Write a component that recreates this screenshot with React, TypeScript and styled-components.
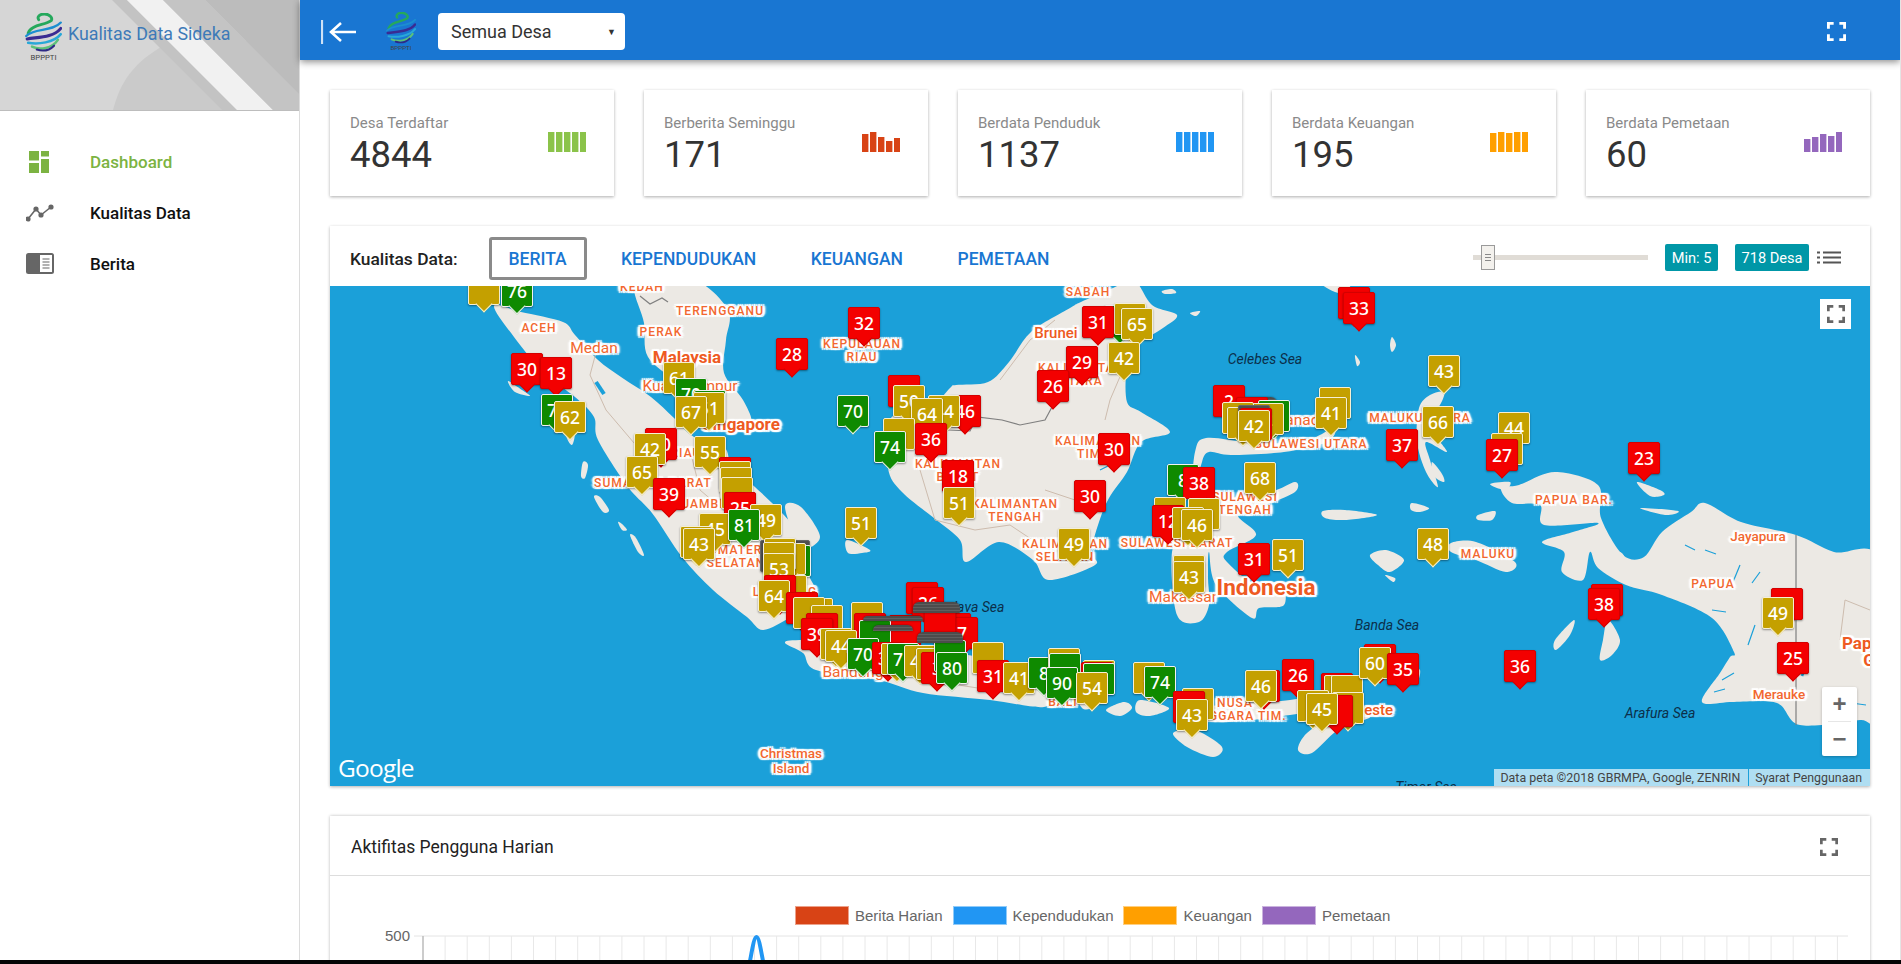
import React from "react";
import styled, { createGlobalStyle, css } from "styled-components";

const Global = createGlobalStyle`
  html, body { margin: 0; padding: 0; background: #fff; overflow: hidden; }
  body { font-family: Roboto, "Liberation Sans", sans-serif; }
  * { box-sizing: border-box; }
`;

const Page = styled.div`
  width: 1901px;
  height: 964px;
  display: flex;
  flex-direction: column;
  overflow: hidden;
`;
const Shell = styled.div`
  height: 960px;
  display: flex;
  overflow: hidden;
  border-right: 1px solid #e4e4e4;
`;
const BottomEdge = styled.div`
  height: 4px;
  background: #050505;
`;

const Sidebar = styled.aside`
  width: 300px;
  flex: none;
  background: #fff;
  border-right: 1px solid #dcdcdc;
`;
const Brand = styled.div`
  position: relative;
  height: 111px;
  overflow: hidden;
  display: flex;
  align-items: flex-start;
  padding: 13px 0 0 25px;
  border-bottom: 1px solid #bdbdbd;
`;
const BrandArt = styled.svg`
  position: absolute;
  inset: 0;
`;
const BrandName = styled.span`
  position: relative;
  margin: 10px 0 0 6px;
  font-size: 17.8px;
  color: #3d7ab8;
  white-space: nowrap;
`;
const BrandLogo = styled.div`
  position: relative;
  display: flex;
`;
const Nav = styled.nav`
  display: flex;
  flex-direction: column;
  padding-top: 25px;
`;
const NavItem = styled.a<{ $active?: boolean }>`
  height: 51px;
  display: flex;
  align-items: center;
  padding-left: 26px;
  font-size: 17px;
  font-weight: 500;
  color: ${(p) => (p.$active ? "#7cb342" : "#111")};
`;
const NavIcon = styled.span`
  width: 64px;
  display: flex;
  align-items: center;
`;

const Main = styled.main`
  flex: 1;
  min-width: 0;
  display: flex;
  flex-direction: column;
`;
const TopBar = styled.header`
  height: 60px;
  flex: none;
  background: #1976d2;
  box-shadow: 0 2px 7px rgba(0, 0, 0, 0.45);
  display: flex;
  align-items: center;
  padding: 3px 54px 0 21px;
  position: relative;
  z-index: 2;
`;
const TopLogo = styled.div`
  margin: 0 22px 0 28px;
  display: flex;
`;
const DesaSelect = styled.div`
  width: 187px;
  height: 37px;
  background: #fff;
  border-radius: 4px;
  display: flex;
  align-items: center;
  justify-content: space-between;
  padding: 0 9px 0 13px;
  font-size: 18px;
  color: #333;
`;
const Caret = styled.span`
  font-size: 9px;
  color: #333;
`;
const TopAction = styled.span`
  margin-left: auto;
  display: flex;
`;

const Content = styled.div`
  padding: 30px 30px 0;
  display: flex;
  flex-direction: column;
  gap: 30px;
`;
const Stats = styled.section`
  display: grid;
  grid-template-columns: repeat(5, 284px);
  justify-content: space-between;
`;
const StatCard = styled.article`
  height: 106px;
  background: #fff;
  box-shadow: 0 1px 3px rgba(0, 0, 0, 0.32);
  padding: 24px 28px 0 20px;
  display: flex;
  justify-content: space-between;
`;
const StatLabel = styled.div`
  font-size: 15px;
  line-height: 18px;
  color: #8a8a8a;
`;
const StatValue = styled.div`
  font-size: 36.5px;
  line-height: 42px;
  margin-top: 2px;
  color: #333;
`;
const Spark = styled.div`
  margin-top: 18px;
`;

const Panel = styled.section`
  background: #fff;
  box-shadow: 0 1px 3px rgba(0, 0, 0, 0.3);
`;
const PanelHead = styled.div`
  height: 60px;
  display: flex;
  align-items: center;
  padding: 3px 29px 0 20px;
`;
const PanelTitle = styled.span`
  font-size: 17.4px;
  font-weight: 500;
  color: #222;
  white-space: nowrap;
  margin-top: 2px;
`;
const Tabs = styled.div`
  display: flex;
  align-items: center;
  gap: 14px;
  margin: 2px 0 0 31px;
`;
const Tab = styled.button<{ $active?: boolean }>`
  height: 43px;
  background: #fff;
  font: 500 17.5px Roboto, sans-serif;
  color: #1976d2;
  border-radius: 3px;
  ${(p) =>
    p.$active
      ? css`
          border: 3px solid #8a8a8a;
          width: 98px;
          padding: 0;
        `
      : css`
          border: 0;
          padding: 0 20.3px;
        `}
`;
const Controls = styled.div`
  margin-left: auto;
  display: flex;
  align-items: center;
`;
const SliderTrack = styled.div`
  position: relative;
  width: 175px;
  height: 5px;
  background: #e0dcd6;
  margin-right: 17px;
`;
const SliderHandle = styled.span`
  position: absolute;
  left: 8px;
  top: -10px;
  width: 14px;
  height: 25px;
  background: #f3f1ed;
  border: 1px solid #9a9a9a;
  display: flex;
  flex-direction: column;
  justify-content: center;
  align-items: center;
  gap: 2px;
  i {
    width: 6px;
    height: 1px;
    background: #888;
  }
`;
const Badge = styled.span<{ $w: number }>`
  width: ${(p) => p.$w}px;
  height: 27px;
  display: flex;
  align-items: center;
  justify-content: center;
  background: #0097a7;
  color: #fff;
  font-size: 14.6px;
  border-radius: 2px;
  margin-right: 17px;
  white-space: nowrap;
`;
const ListBtn = styled.span`
  display: flex;
  margin-left: -9px;
`;

const MapBox = styled.div`
  position: relative;
  height: 500px;
  background: #1ba0d9;
  overflow: hidden;
`;
const MapArt = styled.svg`
  position: absolute;
  inset: 0;
`;
const labelKinds = {
  region: css`
    font-size: 12px;
    line-height: 12.5px;
    letter-spacing: 1.05px;
    font-weight: 500;
    color: #f2672f;
  `,
  city: css`
    font-size: 15.5px;
    line-height: 17px;
    color: #f2672f;
  `,
  small: css`
    font-size: 13.5px;
    line-height: 15px;
    font-weight: 500;
    color: #f2672f;
  `,
  mid: css`
    font-size: 15px;
    line-height: 16px;
    font-weight: 500;
    color: #ee5a22;
  `,
  big: css`
    font-size: 17px;
    line-height: 18px;
    font-weight: 700;
    color: #ee5a22;
  `,
  huge: css`
    font-size: 22.5px;
    line-height: 24px;
    font-weight: 700;
    color: #ee5a22;
  `,
  sea: css`
    font-size: 14px;
    font-style: italic;
    color: #0b2f4a;
    text-shadow: none;
  `,
};
type LabelKind = keyof typeof labelKinds;
const Label = styled.span<{ $kind: LabelKind }>`
  position: absolute;
  transform: translate(-50%, -50%);
  white-space: pre-line;
  text-align: center;
  text-shadow: 0 0 2px #fff, 0 0 2px #fff, 2px 0 1px #fff, -2px 0 1px #fff, 0 2px 1px #fff, 0 -2px 1px #fff,
    2px 2px 1px #fff, -2px -2px 1px #fff, 2px -2px 1px #fff, -2px 2px 1px #fff, 3px 0 2px #fff, -3px 0 2px #fff;
  ${(p) => labelKinds[p.$kind]}
`;
const tones = {
  r: { bg: "#f30000", line: "#d40000" },
  g: { bg: "#0f8a00", line: "#f2f2f2" },
  y: { bg: "#c4a000", line: "#f6f0d4" },
  d: { bg: "#4f4f4f", line: "#666666" },
};
type Tone = keyof typeof tones;
const Pin = styled.div<{ $tone: Tone }>`
  position: absolute;
  width: 32px;
  height: 32px;
  border-radius: 2px;
  border: 1px solid ${(p) => tones[p.$tone].line};
  background: ${(p) => tones[p.$tone].bg};
  color: #fff;
  font: 500 17.5px/30px "Noto Sans", sans-serif;
  text-align: center;
  box-shadow: 0 1px 2px rgba(0, 0, 0, 0.4);
  &::after {
    content: "";
    position: absolute;
    left: 9px;
    bottom: -6px;
    width: 11px;
    height: 11px;
    transform: rotate(45deg);
    background: ${(p) => tones[p.$tone].bg};
    border-right: 1px solid ${(p) => tones[p.$tone].line};
    border-bottom: 1px solid ${(p) => tones[p.$tone].line};
    z-index: -1;
  }
  span {
    position: relative;
    z-index: 1;
  }
`;
const PinStack = styled.div`
  position: absolute;
  border-radius: 6px 6px 1px 1px;
  background: repeating-linear-gradient(180deg, #4c4c4c 0 2px, #5f5f5f 2px 3px);
  box-shadow: 0 0 2px rgba(0, 0, 0, 0.5);
`;
const MapCorner = styled.button`
  position: absolute;
  right: 19px;
  top: 13px;
  width: 31px;
  height: 30px;
  background: #fff;
  border: 0;
  padding: 0;
  display: flex;
  align-items: center;
  justify-content: center;
`;
const ZoomBox = styled.div`
  position: absolute;
  right: 13px;
  bottom: 30px;
  width: 35px;
  height: 69px;
  background: #fff;
  border-radius: 2px;
  display: flex;
  flex-direction: column;
  align-items: center;
  box-shadow: 0 1px 3px rgba(0, 0, 0, 0.25);
`;
const ZoomKey = styled.span`
  flex: 1;
  width: 23px;
  display: flex;
  align-items: center;
  justify-content: center;
  color: #666;
  font: 700 24px/1 "Liberation Sans", sans-serif;
  &:first-child {
    border-bottom: 1px solid #e6e6e6;
  }
`;
const GoogleMark = styled.span`
  position: absolute;
  left: 8px;
  bottom: 3px;
  font: 500 24.5px/30px "Open Sans", sans-serif;
  color: #fff;
  letter-spacing: -0.8px;
`;
const Attribution = styled.div`
  position: absolute;
  right: 0;
  bottom: 0;
  height: 17px;
  display: flex;
  font-size: 12.4px;
  line-height: 17px;
  color: #444;
  span {
    background: rgba(255, 255, 255, 0.65);
    padding: 0 8px 0 6px;
    white-space: nowrap;
  }
  span + span {
    margin-left: 1px;
    padding: 0 8px 0 6px;
  }
`;

const ChartPanel = styled.section`
  background: #fff;
  box-shadow: 0 0 3px rgba(0, 0, 0, 0.28);
  height: 170px;
  overflow: hidden;
`;
const ChartHead = styled.div`
  height: 60px;
  display: flex;
  align-items: center;
  justify-content: space-between;
  padding: 2px 32px 0 21px;
  border-bottom: 1px solid #ddd;
`;
const ChartTitle = styled.span`
  font-size: 17.5px;
  color: #222;
`;
const ChartHeadIcon = styled.span`
  display: flex;
`;
const Legend = styled.div`
  display: flex;
  padding: 30px 0 0 465px;
  height: 50px;
`;
const LegendItem = styled.div`
  display: flex;
  align-items: center;
  height: 19px;
  gap: 6px;
  margin-right: 10px;
  font: 15px "Liberation Sans", sans-serif;
  color: #666;
  white-space: nowrap;
`;
const Swatch = styled.i<{ $c: string }>`
  width: 54px;
  height: 19px;
  background: ${(p) => p.$c};
  border: 1px solid rgba(255, 255, 255, 0.5);
`;
const ChartArt = styled.svg`
  display: block;
`;

function Logo({ w, h, textY }: { w: number; h: number; textY: number }) {
  return (
    <svg width={w} height={h} viewBox="0 0 38 50" fill="none" strokeLinecap="round">
      <path d="M3 21C6 12 20 13 27 8C29 5 25 1 20 1C15 1 12 4 14 7" stroke="#25a85c" strokeWidth="3" />
      <path d="M1 24C9 15 28 20 37 10" stroke="#1c8ed0" strokeWidth="2.4" />
      <path d="M2 27C12 25 29 26 37 16" stroke="#3a2b92" strokeWidth="3.2" />
      <path d="M3 31C13 33 30 31 37 22" stroke="#29a8d8" strokeWidth="2.6" />
      <path d="M7 35C15 39 28 37 34 28" stroke="#5cc27a" strokeWidth="2.6" />
      <path d="M12 38C18 40 25 39 30 34" stroke="#2d2a86" strokeWidth="2.2" />
      <text x="19" y={textY} fontSize="8" fontFamily="Roboto, sans-serif" textAnchor="middle" fill="#444">
        BPPPTI
      </text>
    </svg>
  );
}

const Expand = ({ c, s = 20, w = 3 }: { c: string; s?: number; w?: number }) => (
  <svg width={s} height={s} viewBox="0 0 20 20" fill="none" stroke={c} strokeWidth={w}>
    <path d="M1.5 7V1.5H7M13 1.5H18.5V7M18.5 13V18.5H13M7 18.5H1.5V13" />
  </svg>
);

const Bars = ({ c, hs }: { c: string; hs: number[] }) => (
  <svg width="38" height="20" viewBox="0 0 38 20">
    {hs.map((h, i) => (
      <rect key={i} x={i * 8} y={20 - h} width="6.4" height={h} fill={c} />
    ))}
  </svg>
);

const stats = [
  { l: "Desa Terdaftar", v: "4844", c: "#8bc34a", h: [20, 20, 20, 20, 20] },
  { l: "Berberita Seminggu", v: "171", c: "#d84315", h: [18, 20, 15, 11, 14] },
  { l: "Berdata Penduduk", v: "1137", c: "#2196f3", h: [20, 20, 20, 20, 20] },
  { l: "Berdata Keuangan", v: "195", c: "#ff9f00", h: [19, 20, 19, 20, 20] },
  { l: "Berdata Pemetaan", v: "60", c: "#9467bd", h: [13, 15, 18, 16, 20] },
];

const land: string[] = [
  // Sumatra
  "494,306 521,312 563,322 575,335 598,360 621,377 651,397 674,418 694,437 724,447 732,467 755,487 782,513 797,533 808,573 816,593 805,613 790,618 763,630 747,617 713,590 682,557 652,513 628,487 598,440 594,417 575,397 544,373 514,337",
  // Malay peninsula
  "636,280 694,280 728,310 726,340 724,373 743,400 751,423 728,427 709,413 680,385 648,357 644,323",
  // Borneo
  "888,468 891,418 927,411 950,388 956,385 988,382 1009,362 1031,332 1070,308 1081,302 1113,288 1134,280 1152,305 1177,315 1163,328 1138,345 1127,368 1127,402 1141,412 1170,432 1141,442 1127,472 1109,498 1099,522 1091,552 1095,565 1049,580 1033,560 999,542 966,562 960,540 934,518 902,492",
  // Sulawesi
  "1195,452 1206,438 1249,442 1302,442 1334,428 1327,442 1284,452 1231,455 1209,452 1202,462 1199,485 1220,498 1270,492 1295,482 1295,492 1266,505 1238,515 1256,535 1227,552 1227,562 1256,585 1281,582 1284,605 1259,608 1252,618 1216,585 1209,552 1208,578 1209,605 1199,622 1177,615 1172,552 1188,518 1191,498",
  // Papua
  "1519,485 1555,472 1598,485 1601,518 1623,555 1644,557 1662,532 1691,512 1705,503 1741,522 1796,535 1834,552 1880,562 1880,716 1860,720 1800,725 1777,703 1733,702 1702,702 1720,673 1730,657 1734,652 1712,618 1662,595 1626,585 1598,568 1590,552 1583,580 1562,572 1564,552 1542,542 1573,532 1598,523 1544,525 1540,505 1512,503 1501,488",
  // Java
  "785,643 800,640 870,640 968,655 1030,670 1044,690 1044,707 990,700 923,693 879,680 816,670 803,653",
  // Bali, Lombok, Sumbawa, Flores
  "1075,690 1098,694 1093,707 1082,708",
  "1106,710 1124,702 1132,708 1120,716",
  "1140,700 1169,708 1150,716 1136,712",
  "1213,706 1290,700 1330,690 1330,705 1290,715 1213,722",
  // Timor, Sumba
  "1370,717 1338,730 1312,753 1298,750 1307,733 1334,717",
  "1173,733 1195,730 1222,747 1213,757 1187,747",
  // Bangka, Belitung and west coast islands
  "785,507 801,507 820,537 801,547",
  "847,540 870,550 862,553 848,553",
  "583,462 588,465 585,478 581,476",
  "594,497 600,497 609,510 603,512",
  "618,522 622,524 627,530 622,530",
  "630,535 636,538 644,555 638,552",
  "508,381 522,390 530,396 515,392",
  "568,420 575,430 572,445 566,435",
  // Halmahera
  "1444,392 1430,395 1419,408 1417,442 1426,472 1438,487 1430,460 1426,442 1447,452 1435,435 1429,418 1440,405",
  // Seram, Buru
  "1451,543 1476,542 1515,562 1506,572 1476,560 1451,552",
  "1370,555 1386,550 1404,560 1390,572 1378,565",
  // Biak, Yapen, Yamdena
  "1637,482 1660,490 1664,495 1650,496",
  "1640,508 1678,511 1665,515",
  "1608,620 1620,640 1612,655 1600,660 1603,640",
  // Obi, Misool, Sula
  "1412,503 1429,508 1420,512 1411,510",
  "1478,515 1495,511 1492,520 1478,520",
  "1323,511 1345,510 1377,515 1345,520 1325,518",
  // small ones
  "1320,282 1345,282 1352,294 1335,292",
  "1490,484 1510,482 1505,490",
  "1566,490 1572,494 1568,498",
  "1392,337 1396,345 1392,352 1390,345",
  "1355,355 1360,362 1357,366",
  "1555,640 1574,620 1570,635 1556,650",
  "1413,668 1420,670 1418,680 1412,675",
  "1162,291 1172,289 1176,293 1165,294",
  "1190,313 1200,311 1196,316",
  "1385,575 1395,578 1393,582",
  "1432,462 1442,474 1444,482 1434,476",
  "1620,552 1624,556 1621,560",
];

/** Closed Catmull-Rom curve through the points, so the coasts are not angular. */
function coast(points: string, k = 0.16): string {
  const p = points.split(" ").map((s) => s.split(",").map(Number));
  const n = p.length;
  let d = `M${p[0][0]} ${p[0][1]}`;
  for (let i = 0; i < n; i++) {
    const a = p[(i - 1 + n) % n];
    const b = p[i];
    const c = p[(i + 1) % n];
    const e = p[(i + 2) % n];
    d += `C${b[0] + (c[0] - a[0]) * k} ${b[1] + (c[1] - a[1]) * k} ${c[0] - (e[0] - b[0]) * k} ${
      c[1] - (e[1] - b[1]) * k
    } ${c[0]} ${c[1]}`;
  }
  return d + "Z";
}

type L = [string, number, number, LabelKind];
const labels: L[] = [
  ["ACEH", 539, 328, "region"],
  ["Medan", 594, 348, "city"],
  ["KEDAH", 642, 287, "region"],
  ["TERENGGANU", 720, 311, "region"],
  ["PERAK", 661, 332, "region"],
  ["Malaysia", 687, 357, "big"],
  ["Kuala Lumpur", 690, 386, "city"],
  ["Singapore", 741, 424, "big"],
  ["RIAU", 686, 453, "region"],
  ["SUMATERA BARAT", 653, 483, "region"],
  ["JAMBI", 703, 504, "region"],
  ["SUMATERA\nSELATAN", 736, 556, "region"],
  ["LAMPUNG", 785, 592, "region"],
  ["KEPULAUAN\nRIAU", 862, 350, "region"],
  ["SABAH", 1088, 292, "region"],
  ["Brunei", 1056, 333, "mid"],
  ["KALIMANTAN\nUTARA", 1081, 374, "region"],
  ["KALIMANTAN\nBARAT", 958, 470, "region"],
  ["KALIMANTAN\nTIMUR", 1098, 447, "region"],
  ["KALIMANTAN\nTENGAH", 1015, 510, "region"],
  ["KALIMANTAN\nSELATAN", 1065, 550, "region"],
  ["Celebes Sea", 1265, 359, "sea"],
  ["Manado", 1300, 420, "city"],
  ["SULAWESI UTARA", 1311, 444, "region"],
  ["SULAWESI\nTENGAH", 1245, 503, "region"],
  ["SULAWESI BARAT", 1177, 543, "region"],
  ["Makassar", 1183, 597, "city"],
  ["Indonesia", 1266, 587, "huge"],
  ["Java Sea", 977, 607, "sea"],
  ["Bandung", 853, 672, "city"],
  ["BALI", 1063, 702, "region"],
  ["NUSA\nTENGGARA TIM.", 1235, 709, "region"],
  ["Timor-Leste", 1352, 710, "mid"],
  ["Christmas\nIsland", 791, 761, "small"],
  ["MALUKU UTARA", 1420, 418, "region"],
  ["MALUKU", 1488, 554, "region"],
  ["PAPUA BAR.", 1574, 500, "region"],
  ["Jayapura", 1758, 536, "small"],
  ["PAPUA", 1713, 584, "region"],
  ["Banda Sea", 1387, 625, "sea"],
  ["Arafura Sea", 1660, 713, "sea"],
  ["Timor Sea", 1426, 787, "sea"],
  ["Merauke", 1779, 694, "small"],
  ["Papua", 1866, 643, "big"],
  ["Guinea", 1890, 660, "big"],
];

type P = [number, number, string, Tone];
const pinsBack: P[] = [
  [484, 288, "", "y"],
  [517, 290, "76", "g"],
  [527, 368, "30", "r"],
  [556, 372, "13", "r"],
  [557, 409, "70", "g"],
  [570, 416, "62", "y"],
  [679, 377, "61", "y"],
  [691, 393, "70", "g"],
  [710, 405, "", "g"],
  [709, 407, "51", "y"],
  [691, 411, "67", "y"],
  [661, 443, "40", "r"],
  [650, 448, "42", "y"],
  [642, 471, "65", "y"],
  [710, 451, "55", "y"],
  [735, 472, "", "r"],
  [735, 476, "", "y"],
  [736, 482, "", "y"],
  [737, 492, "", "y"],
  [669, 493, "39", "r"],
  [740, 507, "25", "r"],
  [766, 519, "49", "y"],
  [715, 528, "45", "y"],
  [744, 524, "81", "g"],
  [696, 541, "", "y"],
  [699, 543, "43", "y"],
  [792, 353, "28", "r"],
  [864, 322, "32", "r"],
  [853, 410, "70", "g"],
  [861, 522, "51", "y"],
  [776, 555, "", "d"],
  [794, 555, "", "d"],
  [795, 560, "", "g"],
  [790, 558, "", "y"],
  [780, 553, "", "y"],
  [779, 557, "", "y"],
  [779, 568, "53", "y"],
  [791, 590, "", "y"],
  [780, 590, "", "r"],
  [774, 595, "64", "y"],
  [802, 607, "", "r"],
  [817, 613, "", "y"],
  [809, 612, "", "y"],
  [827, 620, "", "y"],
  [867, 617, "", "y"],
  [922, 597, "", "r"],
  [928, 602, "26", "r"],
  [955, 628, "", "r"],
  [962, 632, "7", "r"],
  [940, 625, "", "r"],
  [870, 628, "", "r"],
  [905, 630, "", "r"],
  [875, 635, "", "g"],
  [822, 628, "", "r"],
  [817, 633, "39", "r"],
  [836, 643, "", "y"],
  [841, 645, "44", "y"],
  [863, 653, "70", "g"],
  [888, 657, "39", "r"],
  [897, 658, "", "y"],
  [903, 658, "71", "g"],
  [920, 660, "45", "y"],
  [932, 663, "", "y"],
  [937, 667, "3", "r"],
  [950, 655, "", "g"],
  [952, 667, "80", "g"],
  [988, 657, "", "y"],
  [993, 675, "31", "r"],
  [1019, 677, "41", "y"],
];
const pinsFront: P[] = [
  [1044, 672, "8", "g"],
  [1064, 663, "", "y"],
  [1065, 668, "", "g"],
  [1099, 675, "", "y"],
  [1097, 677, "", "r"],
  [1099, 678, "", "g"],
  [1062, 682, "90", "g"],
  [1092, 687, "54", "y"],
  [1149, 677, "4", "y"],
  [1160, 681, "74", "g"],
  [1198, 703, "", "y"],
  [1189, 706, "", "r"],
  [1192, 714, "43", "y"],
  [1264, 685, "", "r"],
  [1261, 685, "46", "y"],
  [1298, 674, "26", "r"],
  [1337, 688, "", "r"],
  [1340, 690, "", "y"],
  [1347, 690, "", "y"],
  [1313, 705, "", "y"],
  [1348, 707, "2", "y"],
  [1337, 710, "", "r"],
  [1322, 708, "45", "y"],
  [1380, 659, "", "r"],
  [1375, 662, "60", "y"],
  [1403, 668, "35", "r"],
  [1520, 665, "36", "r"],
  [1793, 657, "25", "r"],
  [904, 390, "", "r"],
  [909, 400, "50", "y"],
  [965, 410, "46", "r"],
  [944, 410, "44", "y"],
  [927, 413, "64", "y"],
  [899, 433, "", "y"],
  [890, 446, "74", "g"],
  [931, 438, "36", "r"],
  [958, 475, "18", "r"],
  [959, 502, "51", "y"],
  [1120, 320, "7", "g"],
  [1130, 318, "", "y"],
  [1098, 321, "31", "r"],
  [1137, 323, "65", "y"],
  [1082, 361, "29", "r"],
  [1124, 357, "42", "y"],
  [1053, 385, "26", "r"],
  [1114, 448, "30", "r"],
  [1090, 495, "30", "r"],
  [1074, 543, "49", "y"],
  [1354, 302, "", "r"],
  [1359, 307, "33", "r"],
  [1229, 400, "2", "r"],
  [1252, 412, "", "r"],
  [1274, 415, "", "g"],
  [1268, 418, "2", "y"],
  [1238, 417, "", "y"],
  [1243, 422, "", "y"],
  [1254, 420, "", "d"],
  [1256, 423, "", "r"],
  [1254, 425, "42", "y"],
  [1335, 402, "", "y"],
  [1331, 412, "41", "y"],
  [1183, 479, "8", "g"],
  [1199, 482, "38", "r"],
  [1260, 477, "68", "y"],
  [1204, 513, "", "y"],
  [1170, 512, "", "y"],
  [1168, 520, "12", "r"],
  [1188, 522, "", "y"],
  [1197, 524, "46", "y"],
  [1189, 570, "", "y"],
  [1189, 576, "43", "y"],
  [1254, 558, "31", "r"],
  [1288, 554, "51", "y"],
  [1444, 370, "43", "y"],
  [1438, 421, "66", "y"],
  [1402, 444, "37", "r"],
  [1514, 427, "44", "y"],
  [1507, 448, "", "y"],
  [1502, 454, "27", "r"],
  [1644, 457, "23", "r"],
  [1433, 543, "48", "y"],
  [1607, 599, "", "r"],
  [1604, 603, "38", "r"],
  [1787, 603, "7", "r"],
  [1778, 612, "49", "y"],
];

const stacks: [number, number, number, number][] = [
  [913, 602, 47, 11],
  [863, 616, 60, 5],
  [873, 625, 40, 6],
  [917, 632, 46, 11],
  [1234, 397, 43, 8],
];

const renderPin = ([x, y, n, t]: P, i: number) => (
  <Pin key={i} $tone={t} style={{ left: x - 346, top: y - 301, zIndex: 0 }}>
    <span>{n}</span>
  </Pin>
);

export default function App() {
  const gridX = Array.from({ length: 65 }, (_, i) => 93 + i * 22.1);
  return (
    <Page>
      <Global />
      <Shell>
        <Sidebar>
          <Brand>
            <BrandArt width="299" height="110" viewBox="0 0 299 110">
              <rect width="299" height="110" fill="#d6d6d6" />
              <path d="M113 110C122 75 140 58 170 42L299 40V110Z" fill="#cacaca" />
              <path d="M112 0H127L237 110H222Z" fill="#c3c3c3" />
              <path d="M127 0H163L273 110H237Z" fill="#f1f1f1" />
              <path d="M163 0H205L299 94V110H273Z" fill="#c4c4c4" />
              <path d="M205 0H299V94Z" fill="#bcbcbc" />
            </BrandArt>
            <BrandLogo>
              <Logo w={37} h={48} textY={49} />
            </BrandLogo>
            <BrandName>Kualitas Data Sideka</BrandName>
          </Brand>
          <Nav>
            <NavItem $active>
              <NavIcon>
                <svg width="26" height="22" viewBox="0 0 26 22" fill="#7cb342">
                  <rect x="3" y="0" width="10" height="9.5" />
                  <rect x="15" y="0" width="8" height="5.5" />
                  <rect x="3" y="12" width="10" height="10" />
                  <rect x="15" y="8" width="8" height="14" />
                </svg>
              </NavIcon>
              Dashboard
            </NavItem>
            <NavItem>
              <NavIcon>
                <svg width="28" height="18" viewBox="0 0 28 18" fill="#666" stroke="#666" strokeWidth="1.6">
                  <path d="M2 15L10 5L15 11L25 3" fill="none" />
                  <circle cx="2" cy="15" r="1.8" />
                  <circle cx="10" cy="5" r="1.8" />
                  <circle cx="15" cy="11" r="1.8" />
                  <circle cx="25" cy="3" r="1.8" />
                </svg>
              </NavIcon>
              Kualitas Data
            </NavItem>
            <NavItem>
              <NavIcon>
                <svg width="28" height="21" viewBox="0 0 28 21">
                  <rect width="28" height="21" rx="2.5" fill="#666" />
                  <rect x="14" y="2" width="12" height="17" fill="#fff" />
                  <path d="M16.5 6H23.5M16.5 9H23.5M16.5 12H23.5M16.5 15H23.5" stroke="#666" strokeWidth="1.2" />
                </svg>
              </NavIcon>
              Berita
            </NavItem>
          </Nav>
        </Sidebar>
        <Main>
          <TopBar>
            <svg width="37" height="24" viewBox="0 0 37 24" fill="none" stroke="#fff">
              <path d="M1 0V24" stroke="#cfe2f6" strokeWidth="2.2" />
              <path d="M35 12H11M20 3L10 12L20 21" strokeWidth="2.6" />
            </svg>
            <TopLogo>
              <Logo w={30} h={39} textY={49} />
            </TopLogo>
            <DesaSelect>
              Semua Desa
              <Caret>▼</Caret>
            </DesaSelect>
            <TopAction>
              <Expand c="#fff" s={19} />
            </TopAction>
          </TopBar>
          <Content>
            <Stats>
              {stats.map((s) => (
                <StatCard key={s.l}>
                  <div>
                    <StatLabel>{s.l}</StatLabel>
                    <StatValue>{s.v}</StatValue>
                  </div>
                  <Spark>
                    <Bars c={s.c} hs={s.h} />
                  </Spark>
                </StatCard>
              ))}
            </Stats>
            <Panel>
              <PanelHead>
                <PanelTitle>Kualitas Data:</PanelTitle>
                <Tabs>
                  <Tab $active>BERITA</Tab>
                  <Tab>KEPENDUDUKAN</Tab>
                  <Tab>KEUANGAN</Tab>
                  <Tab>PEMETAAN</Tab>
                </Tabs>
                <Controls>
                  <SliderTrack>
                    <SliderHandle>
                      <i />
                      <i />
                      <i />
                    </SliderHandle>
                  </SliderTrack>
                  <Badge $w={53}>Min: 5</Badge>
                  <Badge $w={74}>718 Desa</Badge>
                  <ListBtn>
                    <svg width="24" height="13" viewBox="0 0 24 13" stroke="#555" strokeWidth="1.8">
                      <path d="M0 1.5H3M6 1.5H24M0 6.5H3M6 6.5H24M0 11.5H3M6 11.5H24" />
                    </svg>
                  </ListBtn>
                </Controls>
              </PanelHead>
              <MapBox>
                <MapArt width="1540" height="500" viewBox="330 286 1540 500">
                  {land.map((p, i) => (
                    <path key={i} d={coast(p)} fill="#ece9e4" />
                  ))}
                  <g fill="none" stroke="#cdbcae" strokeWidth="1">
                    <path d="M598 345L590 375L606 410L640 450L660 490" />
                    <path d="M690 450L700 490L735 520L760 560" />
                    <path d="M1055 320L1030 340L1000 380" />
                    <path d="M1125 365L1110 400L1105 420" />
                    <path d="M920 470L935 520L975 530L1010 525L1040 545" />
                    <path d="M1045 490L1075 500L1092 480" />
                    <path d="M1870 610L1845 600L1840 640" />
                    <path d="M850 672L890 672L940 682L990 690" />
                  </g>
                  <g fill="none" stroke="#7f7f7f" strokeWidth="1.2">
                    <path d="M1052 407L1045 420L1020 425L1002 420L977 417L970 431L948 430" />
                    <path d="M1796 535V725" />
                    <path d="M640 296L650 304L662 298L668 302" />
                  </g>
                  <g fill="none" stroke="#1ba0d9" strokeWidth="1.2">
                    <path d="M596 382L604 394" strokeWidth="4" />
                    <path d="M1685 545L1695 550M1705 550L1716 554M1740 565L1733 582M1760 572L1752 583M1712 610L1726 612M1755 625L1748 645" />
                    <path d="M1770 700L1786 692M1844 702L1866 705M1722 680L1734 673M1714 692L1725 689" />
                    <path d="M1808 660L1802 676" strokeWidth="2.5" />
                    <path d="M1010 520L1003 505M1100 470L1114 463" />
                  </g>
                </MapArt>
                {labels.map(([t, x, y, k]) => (
                  <Label key={t} $kind={k} style={{ left: x - 330, top: y - 286 }}>
                    {t}
                  </Label>
                ))}
                {pinsBack.map(renderPin)}
                {stacks.map(([x, y, w, h], i) => (
                  <PinStack key={i} style={{ left: x - 330, top: y - 286, width: w, height: h }} />
                ))}
                {pinsFront.map(renderPin)}
                <MapCorner aria-label="Layar penuh">
                  <Expand c="#666" s={18} />
                </MapCorner>
                <GoogleMark>Google</GoogleMark>
                <ZoomBox>
                  <ZoomKey>+</ZoomKey>
                  <ZoomKey>−</ZoomKey>
                </ZoomBox>
                <Attribution>
                  <span>Data peta ©2018 GBRMPA, Google, ZENRIN</span>
                  <span>Syarat Penggunaan</span>
                </Attribution>
              </MapBox>
            </Panel>
            <ChartPanel>
              <ChartHead>
                <ChartTitle>Aktifitas Pengguna Harian</ChartTitle>
                <ChartHeadIcon>
                  <Expand c="#666" s={18} />
                </ChartHeadIcon>
              </ChartHead>
              <Legend>
                <LegendItem>
                  <Swatch $c="#d84315" />
                  Berita Harian
                </LegendItem>
                <LegendItem>
                  <Swatch $c="#2196f3" />
                  Kependudukan
                </LegendItem>
                <LegendItem>
                  <Swatch $c="#ff9f00" />
                  Keuangan
                </LegendItem>
                <LegendItem>
                  <Swatch $c="#9467bd" />
                  Pemetaan
                </LegendItem>
              </Legend>
              <ChartArt width="1540" height="40" viewBox="0 0 1540 40">
                <text x="55" y="15" fontSize="15" fontFamily="Liberation Sans, sans-serif" fill="#666">
                  500
                </text>
                <path d="M84 10H1518" stroke="#e4e4e4" />
                {gridX.map((x, i) => (
                  <path key={i} d={`M${x} 10V40`} stroke={i === 0 ? "#bbb" : "#e8e8e8"} strokeWidth={i === 0 ? 1.5 : 1} />
                ))}
                <path d="M419 40C422 25 424 11 426.5 11C429 11 431 25 434 40" fill="none" stroke="#2196f3" strokeWidth="4" />
              </ChartArt>
            </ChartPanel>
          </Content>
        </Main>
      </Shell>
      <BottomEdge />
    </Page>
  );
}
